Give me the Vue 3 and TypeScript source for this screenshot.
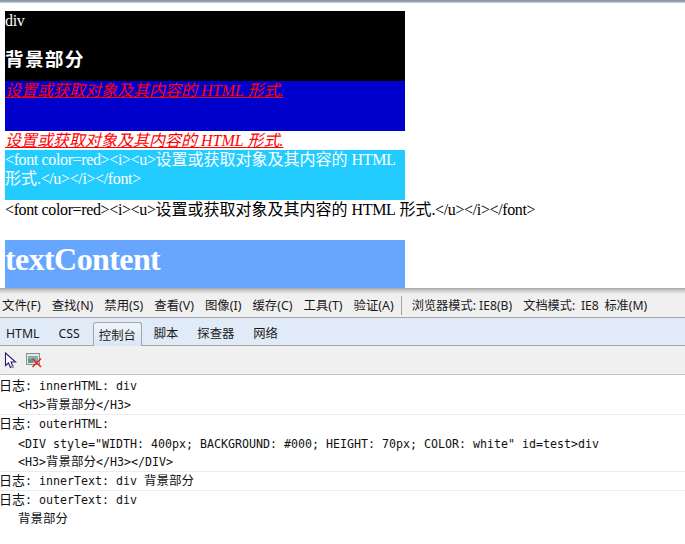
<script setup lang="ts">
const menus: string[] = ['文件(F)', '查找(N)', '禁用(S)', '查看(V)', '图像(I)', '缓存(C)', '工具(T)', '验证(A)']
const tabs: { label: string; active?: boolean }[] = [
  { label: 'HTML' },
  { label: 'CSS' },
  { label: '控制台', active: true },
  { label: '脚本' },
  { label: '探查器' },
  { label: '网络' },
]
</script>

<template>
  <div class="page">
    <div class="topbar"></div>
    <div class="content">
      <div class="black"><span class="nar">div</span><h3 class="h3">背景部分</h3></div>
      <div class="box blue"><i class="red">设置或获取对象及其内容的 HTML 形式.</i></div>
      <div class="line"><i class="red">设置或获取对象及其内容的 HTML 形式.</i></div>
      <div class="box cyan"><span class="nar">&lt;font color=red&gt;&lt;i&gt;&lt;u&gt;</span>设置或获取对象及其内容的 <span class="nar">HTML</span> 形式<span class="nar">.&lt;/u&gt;&lt;/i&gt;&lt;/font&gt;</span></div>
      <div class="line plain"><span class="nar">&lt;font color=red&gt;&lt;i&gt;&lt;u&gt;</span>设置或获取对象及其内容的 <span class="nar">HTML</span> 形式<span class="nar">.&lt;/u&gt;&lt;/i&gt;&lt;/font&gt;</span></div>
      <div class="sky"><h1 class="h1">textContent</h1></div>
    </div>
    <div class="devtools">
      <div class="menubar">
        <span v-for="m in menus" :key="m" class="menu">{{ m }}</span>
        <span class="sep"></span>
        <span class="mode">浏览器模式: IE8(B)</span>
        <span class="mode wide">文档模式: IE8 标准(M)</span>
      </div>
      <div class="tabs">
        <span v-for="t in tabs" :key="t.label" class="tab" :class="{ active: t.active }">{{ t.label }}</span>
      </div>
      <div class="tools">
        <svg class="ic" width="14" height="17" viewBox="0 0 14 17">
          <path d="M1.5 1V13.5L4.5 11L6.5 15.5L9 14.5L7 10H11.5Z" fill="#fff" stroke="#2a1a78" stroke-width="1.1" />
          <path d="M7 13.5h3v2.5h-3z" fill="#9a9a9a" />
        </svg>
        <svg class="ic" width="16" height="15" viewBox="0 0 16 15">
          <rect x="0.5" y="0.5" width="13" height="11" fill="#e6e6e6" stroke="#8f8f8f" />
          <rect x="2" y="3" width="10" height="7" fill="#7fb0c0" />
          <rect x="2" y="6" width="5" height="4" fill="#5f9f6a" />
          <path d="M6.5 5.5L15 14M15 5.5L6.5 14" stroke="#e0301e" stroke-width="1.7" fill="none" />
        </svg>
      </div>
      <div class="log">
        <div class="row r1">
          <div class="l1"><span class="zh">日志</span>: innerHTML: div</div>
          <div class="l2 sp1">&lt;H3&gt;<span class="cjk">背景部分</span>&lt;/H3&gt;</div>
        </div>
        <div class="row r2">
          <div class="l1 short"><span class="zh">日志</span>: outerHTML:</div>
          <div class="l2 sp3">&lt;DIV style="WIDTH: 400px; BACKGROUND: #000; HEIGHT: 70px; COLOR: white" id=test&gt;div</div>
          <div class="l2">&lt;H3&gt;<span class="cjk">背景部分</span>&lt;/H3&gt;&lt;/DIV&gt;</div>
        </div>
        <div class="row r3">
          <div class="l1 short"><span class="zh">日志</span>: innerText: div <span class="cjk">背景部分</span></div>
        </div>
        <div class="row last">
          <div class="l1 short"><span class="zh">日志</span>: outerText: div</div>
          <div class="l2 sp2"><span class="cjk">背景部分</span></div>
        </div>
      </div>
    </div>
  </div>
</template>

<style scoped>
.page {
  width: 685px;
  height: 544px;
  overflow: hidden;
  background: #fff;
  font-family: "Liberation Serif", "Noto Sans CJK SC", serif;
  font-size: 16px;
  color: #000;
}
.topbar {
  height: 3px;
  background: linear-gradient(#7f8c99, #a9b2bb 70%, #dfe2e5);
}
.content {
  height: 285px;
  padding: 8px 0 0 5px;
  box-sizing: border-box;
  overflow: hidden;
}
.nar {
  letter-spacing: -0.37px;
}
.black {
  width: 400px;
  height: 70px;
  background: #000;
  color: #fff;
  line-height: 19px;
}
.h3 {
  margin: 19px 0 0;
  font-size: 18.72px;
  line-height: 22px;
  font-weight: bold;
  letter-spacing: 1.2px;
}
.box {
  width: 400px;
  height: 50px;
  line-height: 19px;
}
.blue {
  background: #0000cc;
}
.cyan {
  background: #22ccff;
  color: #fff;
}
.red {
  color: #f00;
  text-decoration: underline;
}
.line {
  height: 19px;
  line-height: 19px;
  white-space: nowrap;
}
.plain {
  height: 40px;
  line-height: 20px;
}
.sky {
  width: 400px;
  height: 48px;
  background: #66a6ff;
  color: #fff;
}
.h1 {
  margin: 0;
  font-size: 32px;
  line-height: 38px;
  font-weight: bold;
  letter-spacing: -0.6px;
}
.devtools {
  height: 256px;
  background: #fff;
  font-family: "Noto Sans", "Noto Sans CJK SC", sans-serif;
  font-size: 12.4px;
  color: #1a1a1a;
}
.menubar {
  height: 30px;
  box-sizing: border-box;
  padding: 5px 0 0 2px;
  display: flex;
  align-items: center;
  background: linear-gradient(#a8a8a8, #d0d0d0 3px, #f0f0f0 6px);
  border-bottom: 1px solid #a5a5a5;
  white-space: nowrap;
}
.menu {
  margin-right: 11px;
}
.sep {
  width: 1px;
  height: 19px;
  background: #a0a0a0;
  margin: 0 10px 0 -4px;
}
.mode {
  margin-right: 11px;
  font-size: 12.2px;
}
.wide {
  word-spacing: 2.5px;
}
.tabs {
  height: 28px;
  box-sizing: border-box;
  display: flex;
  align-items: flex-end;
  background: #e0ebf7;
  border-bottom: 1px solid #a5a5a5;
}
.tab {
  height: 24px;
  line-height: 26px;
  padding: 0 6px;
  margin-right: 7px;
  font-size: 12.3px;
  box-sizing: border-box;
  white-space: nowrap;
}
.tab.active {
  margin-right: 6px;
  margin-bottom: -1px;
  background: linear-gradient(#eef4fb, #dbe7f5);
  border: 1px solid #a5a5a5;
  border-bottom: none;
  border-radius: 3px 3px 0 0;
  padding: 0 5px;
  line-height: 25px;
}
.tools {
  height: 29px;
  box-sizing: border-box;
  display: flex;
  align-items: center;
  gap: 8px;
  padding: 0 0 0 4px;
  background: #f0f0f0;
  border-bottom: 1px solid #c4c4c4;
}
.ic {
  flex: none;
}
.log {
  font-family: "DejaVu Sans Mono", "Noto Sans CJK SC", monospace;
  font-size: 11.63px;
  color: #111;
  white-space: nowrap;
}
.row {
  border-bottom: 1px solid #ececec;
}
.row.r1 {
  padding-top: 1px;
}
.row.last {
  border-bottom: none;
}
.row.r3 {
  padding-bottom: 1px;
}
.l1 {
  height: 19px;
  line-height: 19px;
}
.l1.short {
  height: 17px;
  line-height: 17px;
}
.l2 {
  height: 18px;
  line-height: 18px;
  padding-left: 18px;
}
.sp1 {
  margin-top: 1px;
}
.sp2 {
  margin-top: 2px;
}
.sp3 {
  margin-top: 3px;
}
.cjk {
  font-size: 12.5px;
}
.zh {
  font-size: 13px;
  margin-left: -1px;
}
</style>
